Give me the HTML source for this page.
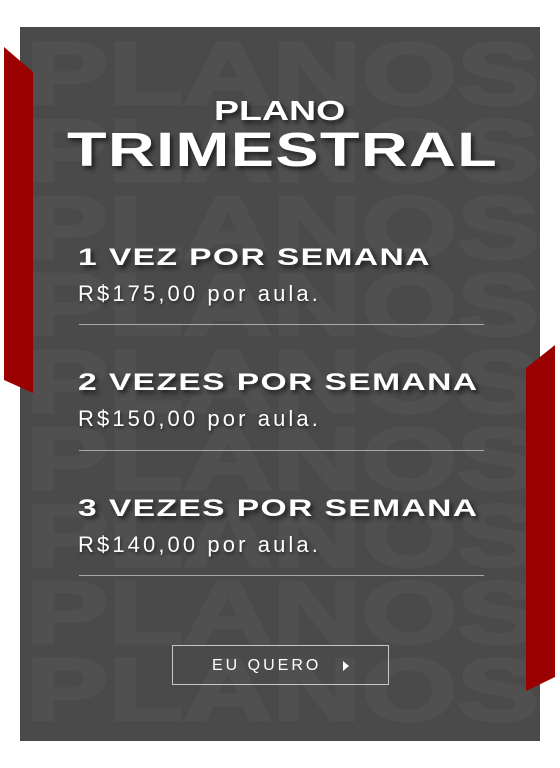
<!DOCTYPE html>
<html><head><meta charset="utf-8"><style>
body{margin:0;width:560px;height:768px;background:#fff;position:relative;overflow:hidden;font-family:"Liberation Sans",sans-serif}
.panel{position:absolute;left:20px;top:27px;width:520px;height:714px;background:#4a4a4a;overflow:hidden}
.bg{position:absolute;left:6px;font-weight:bold;font-size:88px;line-height:77px;color:#505050;letter-spacing:0px;white-space:nowrap;transform-origin:left top;transform:scaleX(1.4);-webkit-text-stroke:3px #505050}
.t{position:absolute;color:#fff;font-weight:bold;white-space:nowrap;text-shadow:2px 3px 4px rgba(0,0,0,.6);transform-origin:left top}
.p{position:absolute;color:#fff;font-size:22px;letter-spacing:3.1px;white-space:nowrap;text-shadow:1px 2px 3px rgba(0,0,0,.5)}
.ln{position:absolute;left:79px;width:405px;height:1px;background:#aaa}
</style></head><body>
<div class="panel">
<div class="bg" style="top:8px">PLANOS<br>PLANOS<br>PLANOS<br>PLANOS<br>PLANOS<br>PLANOS<br>PLANOS<br>PLANOS<br>PLANOS</div>
</div>
<svg style="position:absolute;left:0;top:0" width="560" height="768">
<polygon points="4,47 33,72 33,393 4,380" fill="#9b0000"/>
<polygon points="526,368 555,345 555,677 526,691" fill="#9b0000"/>
</svg>
<div class="t" style="left:214px;top:95px;font-size:28px;transform:scaleX(1.34)">PLANO</div>
<div class="t" style="left:67px;top:123px;font-size:48px;letter-spacing:1px;transform:scaleX(1.35)">TRIMESTRAL</div>
<div class="t" style="left:78px;top:244px;font-size:24px;letter-spacing:1px;transform:scaleX(1.4)">1 VEZ POR SEMANA</div>
<div class="p" style="left:78px;top:281px">R$175,00 por aula.</div>
<div class="ln" style="top:324px"></div>
<div class="t" style="left:78px;top:369px;font-size:24px;letter-spacing:1px;transform:scaleX(1.4)">2 VEZES POR SEMANA</div>
<div class="p" style="left:78px;top:406px">R$150,00 por aula.</div>
<div class="ln" style="top:450px"></div>
<div class="t" style="left:78px;top:495px;font-size:24px;letter-spacing:1px;transform:scaleX(1.4)">3 VEZES POR SEMANA</div>
<div class="p" style="left:78px;top:532px">R$140,00 por aula.</div>
<div class="ln" style="top:575px"></div>
<div style="position:absolute;left:172px;top:645px;width:215px;height:38px;border:1px solid #c8c8c8;color:#fff;font-size:16px;letter-spacing:3px;line-height:38px;box-sizing:content-box">
<span style="position:absolute;left:39px;top:1px">EU QUERO</span>
<svg style="position:absolute;left:169px;top:15px" width="8" height="10"><polygon points="1,0 7,5 1,10" fill="#fff"/></svg>
</div>
</body></html>
